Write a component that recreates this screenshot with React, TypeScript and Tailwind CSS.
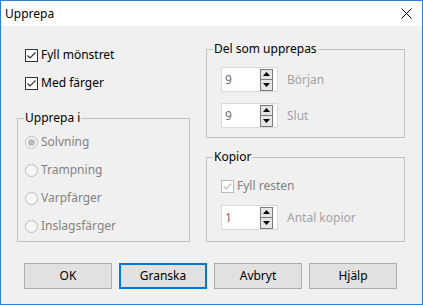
import React from 'react';

type CheckProps = {
  label: string;
  checked?: boolean;
  disabled?: boolean;
};

const Check: React.FC<CheckProps> = ({ label, checked = false, disabled = false }) => (
  <div className="h-[16px] flex items-center gap-[3px]">
    <div
      className={`w-[13px] h-[13px] border bg-white flex items-center justify-center ${
        disabled ? 'border-[#bcbcbc]' : 'border-[#333333]'
      }`}
    >
      {checked && (
        <svg width="11" height="11" viewBox="0 0 11 11">
          <path
            d="M1.5 5.5 L4 8 L9.5 2.5"
            fill="none"
            stroke={disabled ? '#bcbcbc' : '#333333'}
            strokeWidth="1.2"
          />
        </svg>
      )}
    </div>
    <span className={disabled ? 'text-[#7f7f7f]' : 'text-black'}>{label}</span>
  </div>
);

const Radio: React.FC<{ label: string; selected?: boolean }> = ({ label, selected = false }) => (
  <div className="h-[16px] flex items-center gap-[3px]">
    <div className="w-[13px] h-[13px] rounded-full border border-[#bcbcbc] bg-[#f7f7f7] flex items-center justify-center">
      {selected && <div className="w-[7px] h-[7px] rounded-full bg-[#bcbcbc]" />}
    </div>
    <span className="text-[#838383]">{label}</span>
  </div>
);

const Spinner: React.FC<{ value: string; label: string }> = ({ value, label }) => (
  <div className="flex items-center gap-[9px]">
    <div className="w-[57px] h-[25px] border border-[#d9d9d9] bg-white flex items-center justify-between pl-[3px] pr-[4px]">
      <span className="text-[#6d6d6d]">{value}</span>
      <div className="w-[13px] h-[22px] flex flex-col">
        <div className="flex-1 border border-[#7a7a7a] bg-[#e6e6e6] flex items-center justify-center">
          <svg width="7" height="4" viewBox="0 0 7 4">
            <path d="M0 4 L3.5 0 L7 4 Z" fill="#000" />
          </svg>
        </div>
        <div className="flex-1 border border-t-0 border-[#7a7a7a] bg-[#e6e6e6] flex items-center justify-center">
          <svg width="7" height="4" viewBox="0 0 7 4">
            <path d="M0 0 L7 0 L3.5 4 Z" fill="#000" />
          </svg>
        </div>
      </div>
    </div>
    <span className="text-[#a3a3a3]">{label}</span>
  </div>
);

const Group: React.FC<{ title: string; className?: string; children: React.ReactNode }> = ({
  title,
  className = '',
  children
}) => (
  <div className={`relative border border-[#c2c2c2] ${className}`}>
    <span className="absolute -top-[9px] left-[6px] px-[1px] h-[16px] leading-[16px] bg-[#f0f0f0] text-black">
      {title}
    </span>
    {children}
  </div>
);

const DialogButton: React.FC<{ label: string; focused?: boolean }> = ({ label, focused = false }) => (
  <button
    type="button"
    className={`w-[88px] h-[26px] bg-[#e1e1e1] text-black flex items-center justify-center ${
      focused ? 'border-2 border-[#0078d7]' : 'border border-[#adadad]'
    }`}
  >
    {label}
  </button>
);

export default function App() {
  return (
    <div className="w-[423px] h-[305px] border border-[#2b7fd4] bg-[#f0f0f0] flex flex-col font-['Noto_Sans',sans-serif] text-[12px] leading-[16px]">
      {/* title bar */}
      <div className="h-[25px] bg-white flex items-center justify-between pl-[4px] pr-[10px]">
        <span className="text-black">Upprepa</span>
        <svg width="11" height="11" viewBox="0 0 11 11">
          <path d="M0.5 0.5 L10.5 10.5 M10.5 0.5 L0.5 10.5" stroke="#000" strokeWidth="1" />
        </svg>
      </div>

      <div className="flex-1 px-[16px]">
        <div className="flex gap-[16px]">
          {/* left column */}
          <div className="w-[173px] flex flex-col">
            <div className="mt-[21px] ml-[8px] flex flex-col gap-[12px]">
              <Check label="Fyll mönstret" checked />
              <Check label="Med färger" checked />
            </div>
            <Group title="Upprepa i" className="mt-[27px] h-[124px] pt-[15px] pl-[7px]">
              <div className="flex flex-col gap-[12px]">
                <Radio label="Solvning" selected />
                <Radio label="Trampning" />
                <Radio label="Varpfärger" />
                <Radio label="Inslagsfärger" />
              </div>
            </Group>
          </div>

          {/* right column */}
          <div className="w-[199px] flex flex-col">
            <Group title="Del som upprepas" className="mt-[23px] h-[89px] pt-[17px] pl-[14px]">
              <div className="flex flex-col gap-[11px]">
                <Spinner value="9" label="Början" />
                <Spinner value="9" label="Slut" />
              </div>
            </Group>
            <Group title="Kopior" className="mt-[19px] h-[85px] pt-[20px] pl-[14px]">
              <div className="flex flex-col gap-[11px]">
                <Check label="Fyll resten" checked disabled />
                <Spinner value="1" label="Antal kopior" />
              </div>
            </Group>
          </div>
        </div>

        <div className="mt-[21px] ml-[7px] flex gap-[7px]">
          <DialogButton label="OK" />
          <DialogButton label="Granska" focused />
          <DialogButton label="Avbryt" />
          <DialogButton label="Hjälp" />
        </div>
      </div>
    </div>
  );
}
